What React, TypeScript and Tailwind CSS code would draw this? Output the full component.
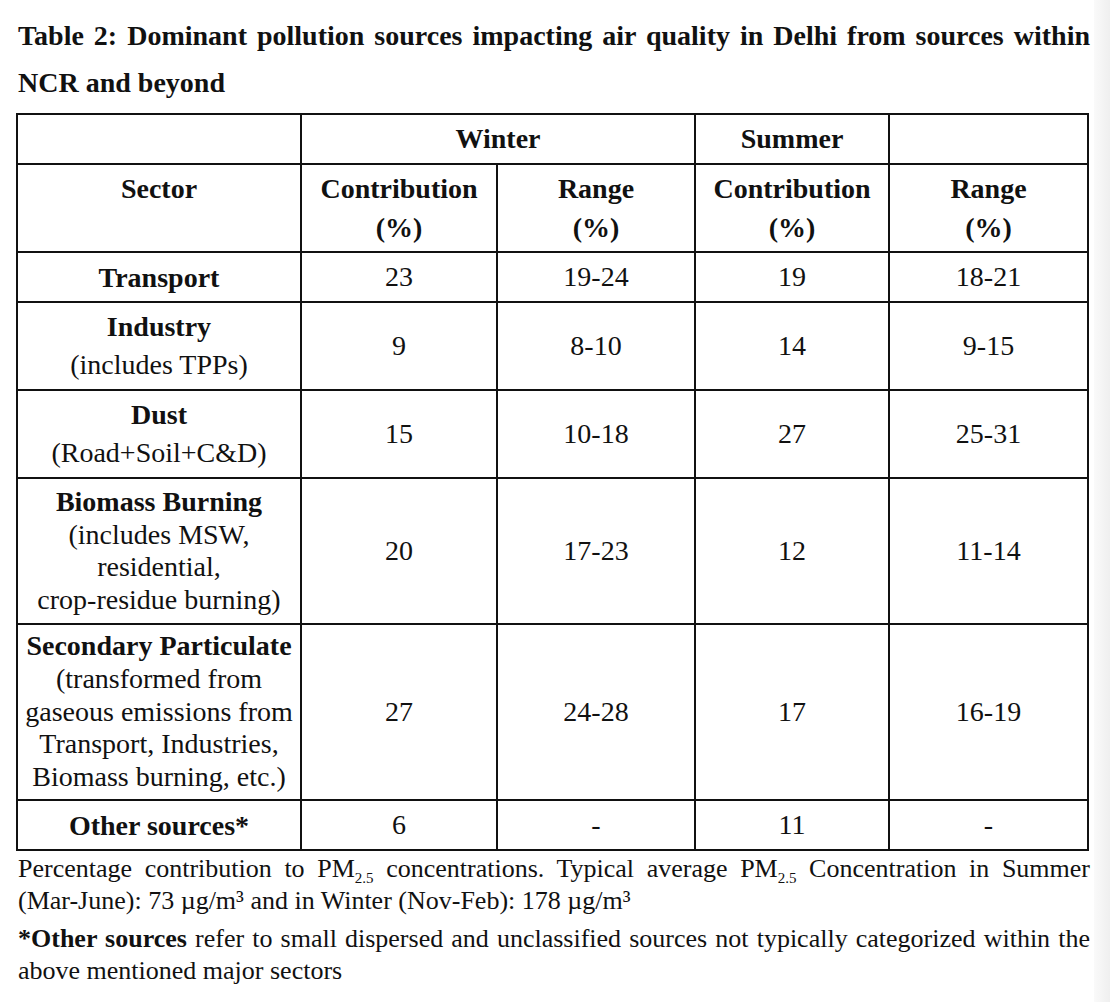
import React from "react";

// ─── Data ─────────────────────────────────────────────────────────────────────

interface Row {
  title: string;
  sub?: string[];
  values: [string, string, string, string];
  height: string;
  leading: string;
}

const rows: Row[] = [
  { title: "Transport", values: ["23", "19-24", "19", "18-21"], height: "h-[50px]", leading: "leading-[33px]" },
  { title: "Industry", sub: ["(includes TPPs)"], values: ["9", "8-10", "14", "9-15"], height: "h-[88px]", leading: "leading-[38px]" },
  { title: "Dust", sub: ["(Road+Soil+C&D)"], values: ["15", "10-18", "27", "25-31"], height: "h-[88px]", leading: "leading-[38px]" },
  {
    title: "Biomass Burning",
    sub: ["(includes MSW,", "residential,", "crop-residue burning)"],
    values: ["20", "17-23", "12", "11-14"],
    height: "h-[146px]",
    leading: "leading-[32.5px]",
  },
  {
    title: "Secondary Particulate",
    sub: ["(transformed from", "gaseous emissions from", "Transport, Industries,", "Biomass burning, etc.)"],
    values: ["27", "24-28", "17", "16-19"],
    height: "h-[176px]",
    leading: "leading-[32.7px]",
  },
  { title: "Other sources*", values: ["6", "-", "11", "-"], height: "h-[50px]", leading: "leading-[33px]" },
];

const cell = "border-2 border-[#111] text-center align-middle p-0";
const head = "border-2 border-[#111] text-center align-top p-0 pt-[4px]";

function Pm() {
  return (
    <>
      PM<span className="relative top-[6px] text-[15px] leading-none">2.5</span>
    </>
  );
}

// ─── Component ────────────────────────────────────────────────────────────────

export default function App() {
  return (
    <div className="flex min-h-[1002px] w-[1110px] bg-white font-['Liberation_Serif','Times_New_Roman',serif] text-[#111]">
      <div className="w-[1094px] shrink-0">
        {/* ── Title ─────────────────────────────────────────────────── */}
        <h1 className="ml-[18px] w-[1072px] pt-[12px] text-justify text-[28px] font-bold leading-[47px]">
          Table 2: Dominant pollution sources impacting air quality in Delhi from sources within NCR and beyond
        </h1>

        {/* ── Table ─────────────────────────────────────────────────── */}
        <table className="ml-[16px] mt-[7px] w-[1071px] table-fixed border-collapse text-[28px]">
          <colgroup>
            <col className="w-[284px]" />
            <col className="w-[196px]" />
            <col className="w-[198px]" />
            <col className="w-[194px]" />
            <col className="w-[199px]" />
          </colgroup>
          <tbody>
            <tr className="h-[50px] font-bold">
              <td className={cell} />
              <td className={cell} colSpan={2}>
                Winter
              </td>
              <td className={cell}>Summer</td>
              <td className={cell} />
            </tr>
            <tr className="h-[88px] font-bold leading-[39px]">
              <td className={head}>Sector</td>
              <td className={head}>
                Contribution
                <br />
                (%)
              </td>
              <td className={head}>
                Range
                <br />
                (%)
              </td>
              <td className={head}>
                Contribution
                <br />
                (%)
              </td>
              <td className={head}>
                Range
                <br />
                (%)
              </td>
            </tr>
            {rows.map((r) => (
              <tr key={r.title} className={r.height}>
                <td className={`${cell} ${r.leading}`}>
                  <div className="font-bold">{r.title}</div>
                  {r.sub?.map((s) => (
                    <div key={s}>{s}</div>
                  ))}
                </td>
                {r.values.map((v, i) => (
                  <td key={i} className={cell}>
                    {v}
                  </td>
                ))}
              </tr>
            ))}
          </tbody>
        </table>

        {/* ── Notes ─────────────────────────────────────────────────── */}
        <div className="ml-[18px] mt-[2px] w-[1072px] text-justify text-[26px] leading-[32px]">
          <p>
            Percentage contribution to <Pm /> concentrations. Typical average <Pm /> Concentration in Summer
            (Mar-June): 73 µg/m³ and in Winter (Nov-Feb): 178 µg/m³
          </p>
          <p className="mt-[6px]">
            <b>*Other sources</b> refer to small dispersed and unclassified sources not typically categorized within
            the above mentioned major sectors
          </p>
        </div>
      </div>
      <div className="flex-1 bg-gradient-to-r from-[#fafafa] to-[#efefef]" />
    </div>
  );
}
